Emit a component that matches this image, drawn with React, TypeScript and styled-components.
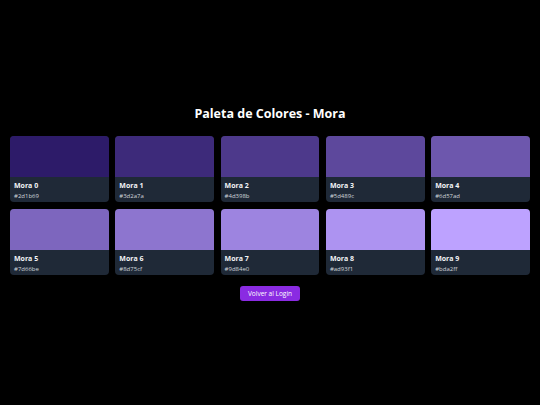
import styled, { createGlobalStyle } from "styled-components";

const GlobalStyle = createGlobalStyle`
  html, body {
    margin: 0;
    padding: 0;
    background: #000;
  }
  body {
    font-family: "Open Sans", "Noto Sans", sans-serif;
  }
`;

const Page = styled.main`
  min-height: 405px;
  box-sizing: border-box;
  padding: 0 10px;
  display: flex;
  flex-direction: column;
  align-items: center;
  justify-content: center;
  color: #fff;
`;

const Title = styled.h1`
  margin: 0 0 14px;
  font-size: 12.5px;
  line-height: 17px;
  font-weight: 700;
`;

const Grid = styled.section`
  width: 100%;
  display: grid;
  grid-template-columns: repeat(5, 1fr);
  gap: 7px 6.5px;
`;

const Card = styled.div`
  height: 66px;
  border-radius: 4px;
  overflow: hidden;
  background: #1f2937;
  display: flex;
  flex-direction: column;
`;

const Swatch = styled.div<{ $color: string }>`
  height: 41px;
  flex-shrink: 0;
  background: ${(p) => p.$color};
`;

const Info = styled.div`
  flex: 1;
  box-sizing: border-box;
  padding: 4px 4px 0;
  display: flex;
  flex-direction: column;
  gap: 1px;
`;

const Name = styled.span`
  font-size: 7px;
  line-height: 10px;
  font-weight: 700;
  color: #f3f4f6;
`;

const Hex = styled.span`
  font-size: 6px;
  line-height: 8px;
  color: #d1d5db;
`;

const BackButton = styled.button`
  margin-top: 11px;
  height: 15px;
  padding: 0 8px;
  border: none;
  border-radius: 3px;
  background: #8a2be2;
  color: #fff;
  font-family: "Open Sans", "Noto Sans", sans-serif;
  font-size: 6.5px;
  line-height: 15px;
  cursor: pointer;
`;

const palette = [
  "#2d1b69",
  "#3d2a7a",
  "#4d398b",
  "#5d489c",
  "#6d57ad",
  "#7d66be",
  "#8d75cf",
  "#9d84e0",
  "#ad93f1",
  "#bda2ff",
];

const App = () => {
  return (
    <>
      <GlobalStyle />
      <Page>
        <Title>Paleta de Colores - Mora</Title>
        <Grid>
          {palette.map((color, i) => (
            <Card key={color}>
              <Swatch $color={color} />
              <Info>
                <Name>Mora {i}</Name>
                <Hex>{color}</Hex>
              </Info>
            </Card>
          ))}
        </Grid>
        <BackButton>Volver al Login</BackButton>
      </Page>
    </>
  );
};

export default App;
